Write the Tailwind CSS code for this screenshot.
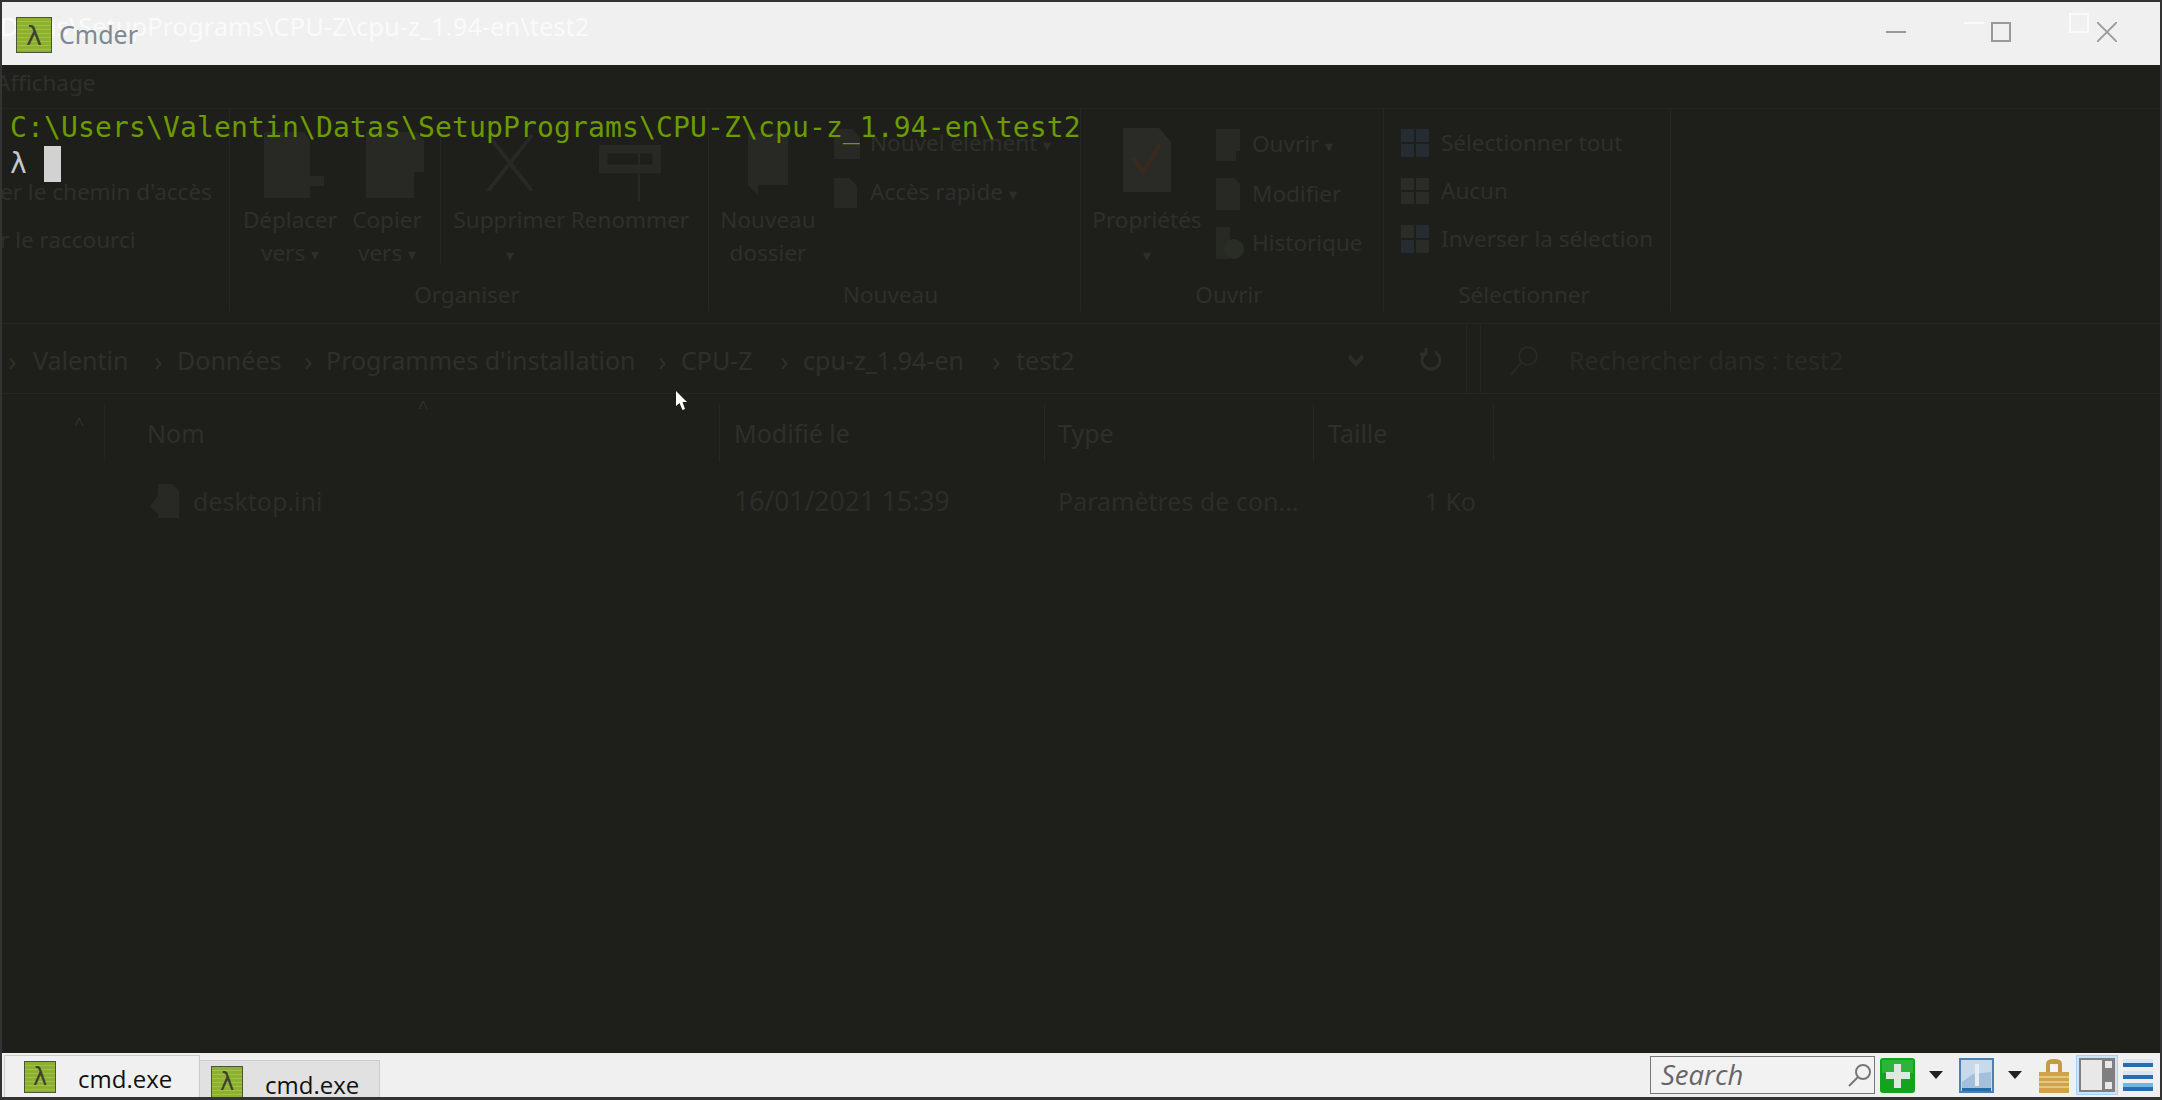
<!DOCTYPE html>
<html lang="fr">
<head>
  <meta charset="UTF-8" />
  <title>Cmder</title>
  <script src="https://cdn.jsdelivr.net/npm/@tailwindcss/browser@4"></script>
</head>
<body class="bg-[#333333] h-[1100px] w-[2162px] overflow-hidden font-['Noto_Sans',sans-serif]">
  <div class="h-[1100px] pt-[2px] pl-[2px] pr-[2px] pb-[3px] flex flex-col">

    <!-- Title bar -->
    <div class="relative h-[63px] shrink-0 bg-[#f0f0f0] flex items-center overflow-hidden">
      <div class="absolute left-[-2px] top-[-2px] text-[25.5px] leading-[52px] whitespace-nowrap text-[#fafafa]">Datas\SetupPrograms\CPU-Z\cpu-z_1.94-en\test2</div>
      <div class="absolute left-[1962px] top-[20px] w-[20px] h-[2px] bg-[#fafafa]"></div>
      <div class="absolute left-[2067px] top-[11px] w-[20px] h-[20px] border-2 border-[#fafafa]"></div>

      <div class="relative ml-[14px] w-[36px] h-[36px] mt-[3px] border border-[#4a5535] bg-[repeating-linear-gradient(180deg,#8db02e_0,#8db02e_3px,#a2c04c_3px,#a2c04c_4px)] flex items-center justify-center text-[27px] leading-none text-[#3c4030] font-['DejaVu_Sans',sans-serif]">λ</div>
      <div class="relative ml-[7px] mt-[3px] text-[25px] text-[#7c8894]">Cmder</div>

      <div class="absolute left-[1884px] top-[29px] w-[20px] h-[2px] bg-[#999999]"></div>
      <div class="absolute left-[1989px] top-[20px] w-[20px] h-[20px] border-2 border-[#999999]"></div>
      <svg class="absolute left-[2095px] top-[20px] w-[20px] h-[20px]" viewBox="0 0 20 20" fill="none" stroke="#999999" stroke-width="1.8"><path d="M0 0 L20 20 M20 0 L0 20" /></svg>
    </div>

    <!-- Terminal, with the window behind showing through -->
    <div class="relative flex-1 bg-[#1e1f1a] overflow-hidden">

      <!-- Ghost explorer window -->
      <div class="absolute inset-0 text-[25px] leading-[32px] text-[#2e2f2b] whitespace-nowrap">
        <div class="h-[43px] pt-[2px] ml-[-6px] text-[22.5px]">Affichage</div>

        <!-- Ribbon -->
        <div class="flex h-[216px] border-t border-[#23241f] text-[22.5px]">
          <div class="border-r border-[#262722] h-[202px] pt-[67px] pl-[12px] ml-[-14px] w-[242px] flex flex-col gap-[16px]">
            <div>er le chemin d'accès</div>
            <div>r le raccourci</div>
          </div>

          <div class="w-[479px] border-r border-[#262722] h-[202px] flex flex-col">
            <div class="flex h-[168px]">
              <div class="w-[112px] pl-[8px] flex flex-col items-center">
                <svg class="w-[60px] h-[66px] mt-[23px] ml-[8px] shrink-0" viewBox="0 0 60 66" fill="#282925"><path d="M0 0 H40 L46 8 V44 H60 V54 H46 V66 H0 Z" /></svg>
                <div class="mt-[5px] leading-[33px] text-center">Déplacer<br />vers <span class="text-[16px] align-middle">▾</span></div>
              </div>
              <div class="w-[98px] pr-[8px] flex flex-col items-center">
                <svg class="w-[58px] h-[66px] mt-[23px] ml-[16px] shrink-0" viewBox="0 0 58 66" fill="#282925"><path d="M0 0 H50 L58 8 V40 H48 V66 H0 Z" /></svg>
                <div class="mt-[5px] leading-[33px] text-center">Copier<br />vers <span class="text-[16px] align-middle">▾</span></div>
              </div>
              <div class="w-[130px] pl-[8px] border-l border-[#262722] h-[132px] mt-[24px] flex flex-col items-center">
                <svg class="w-[52px] h-[56px] mt-[2px] shrink-0" viewBox="0 0 52 56" fill="none" stroke="#282925" stroke-width="4"><path d="M4 0 L48 56 M48 0 L4 56" /></svg>
                <div class="mt-[12px] leading-[33px] text-center">Supprimer<br /><span class="text-[16px]">▾</span></div>
              </div>
              <div class="w-[120px] flex flex-col items-center">
                <svg class="w-[62px] h-[60px] mt-[36px] shrink-0" viewBox="0 0 62 60" fill="none" stroke="#282925" stroke-width="9"><path d="M4 4 H58 V24 H4 Z" /><path d="M40 0 V56" stroke-width="2" /></svg>
                <div class="mt-[-2px] leading-[33px] text-center">Renommer</div>
              </div>
            </div>
            <div class="text-center pr-[4px] pt-[2px]">Organiser</div>
          </div>

          <div class="w-[372px] border-r border-[#262722] h-[202px] flex flex-col">
            <div class="flex h-[168px]">
              <div class="w-[118px] flex flex-col items-center">
                <svg class="w-[40px] h-[62px] mt-[24px] shrink-0" viewBox="0 0 40 62" fill="#282925"><path d="M0 0 H40 V52 H10 V62 L0 52 Z" /></svg>
                <div class="mt-[8px] leading-[33px] text-center">Nouveau<br />dossier</div>
              </div>
              <div class="flex flex-col gap-[17px] pt-[19px]">
                <div class="flex items-center gap-[10px] h-[32px] ml-[7px]">
                  <svg class="w-[26px] h-[30px]" viewBox="0 0 26 30" fill="#282925"><path d="M0 0 H18 L26 8 V30 H0 Z" /></svg>
                  <span>Nouvel élément <span class="text-[16px] align-middle">▾</span></span>
                </div>
                <div class="flex items-center gap-[13px] h-[32px] ml-[7px]">
                  <svg class="w-[23px] h-[30px]" viewBox="0 0 23 30" fill="#282925"><path d="M0 0 H15 L23 8 V30 H0 Z" /></svg>
                  <span>Accès rapide <span class="text-[16px] align-middle">▾</span></span>
                </div>
              </div>
            </div>
            <div class="text-center pr-[8px] pt-[2px]">Nouveau</div>
          </div>

          <div class="w-[303px] border-r border-[#262722] h-[202px] flex flex-col">
            <div class="flex h-[168px]">
              <div class="w-[132px] flex flex-col items-center">
                <svg class="w-[48px] h-[64px] mt-[19px] shrink-0" viewBox="0 0 48 64"><path d="M0 0 H36 L48 14 V64 H0 Z" fill="#2a2b27" /><path d="M10 30 L20 44 L37 16" fill="none" stroke="#3a2a1e" stroke-width="4" /></svg>
                <div class="mt-[11px] leading-[33px] text-center">Propriétés<br /><span class="text-[16px]">▾</span></div>
              </div>
              <div class="flex flex-col gap-[17px] pt-[20px]">
                <div class="flex items-center gap-[12px] h-[32px] ml-[3px]">
                  <svg class="w-[24px] h-[32px]" viewBox="0 0 24 32" fill="#282925"><path d="M0 0 H24 V14 L28 22 H20 V32 H0 Z" /></svg>
                  <span>Ouvrir <span class="text-[16px] align-middle">▾</span></span>
                </div>
                <div class="flex items-center gap-[12px] h-[32px] ml-[3px]">
                  <svg class="w-[24px] h-[32px]" viewBox="0 0 24 32" fill="#282925"><path d="M0 0 H18 L24 6 V32 H0 Z" /></svg>
                  <span>Modifier</span>
                </div>
                <div class="flex items-center gap-[12px] h-[32px] ml-[3px]">
                  <svg class="w-[30px] h-[32px] mr-[-6px]" viewBox="0 0 30 32"><path d="M0 0 H14 V32 H0 Z" fill="#282925" /><circle cx="18" cy="22" r="10" fill="#2a2d25" /></svg>
                  <span>Historique</span>
                </div>
              </div>
            </div>
            <div class="text-center pr-[6px] pt-[2px]">Ouvrir</div>
          </div>

          <div class="w-[287px] border-r border-[#262722] h-[202px] flex flex-col">
            <div class="flex flex-col gap-[16px] pt-[18px] pl-[17px] h-[168px]">
              <div class="flex items-center gap-[12px] h-[32px]">
                <div class="grid grid-cols-2 gap-[2px] w-[28px]"><i class="h-[13px] bg-[#252d33]"></i><i class="h-[13px] bg-[#252d33]"></i><i class="h-[13px] bg-[#252d33]"></i><i class="h-[13px] bg-[#252d33]"></i></div>
                <span>Sélectionner tout</span>
              </div>
              <div class="flex items-center gap-[12px] h-[32px]">
                <div class="grid grid-cols-2 gap-[2px] w-[28px]"><i class="h-[12px] bg-[#2b2c28]"></i><i class="h-[12px] bg-[#2b2c28]"></i><i class="h-[12px] bg-[#2b2c28]"></i><i class="h-[12px] bg-[#2b2c28]"></i></div>
                <span>Aucun</span>
              </div>
              <div class="flex items-center gap-[12px] h-[32px]">
                <div class="grid grid-cols-2 gap-[2px] w-[28px]"><i class="h-[13px] bg-[#2b2c28]"></i><i class="h-[13px] bg-[#252d33]"></i><i class="h-[13px] bg-[#252d33]"></i><i class="h-[13px] bg-[#2b2c28]"></i></div>
                <span>Inverser la sélection</span>
              </div>
            </div>
            <div class="text-center pr-[6px] pt-[2px]">Sélectionner</div>
          </div>
        </div>

        <!-- Address bar -->
        <div class="flex h-[71px] mt-[-1px] border-y border-[#262722] items-center">
          <div class="flex items-center w-[1465px] h-full border-r border-[#262722] pt-[3px]">
            <span class="w-[31px] pl-[6px] text-[28px]">›</span><span class="w-[121px]">Valentin</span>
            <span class="w-[23px] text-[28px]">›</span><span class="w-[127px]">Données</span>
            <span class="w-[22px] text-[28px]">›</span><span class="w-[332px]">Programmes d'installation</span>
            <span class="w-[23px] text-[28px]">›</span><span class="w-[99px]">CPU-Z</span>
            <span class="w-[23px] text-[28px]">›</span><span class="w-[189px]">cpu-z_1.94-en</span>
            <span class="w-[24px] text-[28px]">›</span><span class="w-[332px]">test2</span>
            <svg class="w-[16px] h-[12px] mr-[56px]" viewBox="0 0 16 12" fill="none" stroke="#2d2e2a" stroke-width="4"><path d="M1 2 L8 10 L15 2" /></svg>
            <svg class="w-[22px] h-[24px]" viewBox="0 0 22 24" fill="none" stroke="#2d2e2a" stroke-width="3"><path d="M7 4 A9 9 0 1 0 15 4 M6 0 V6 H0" /></svg>
          </div>
          <div class="flex items-center ml-[13px] h-full flex-1 border-l border-[#262722] pl-[29px] pt-[3px] gap-[31px] text-[#292a26]">
            <svg class="w-[28px] h-[30px]" viewBox="0 0 28 30" fill="none" stroke="#282925" stroke-width="2"><circle cx="18" cy="11" r="9" /><path d="M11 18 L1 30" /></svg>
            <span>Rechercher dans : test2</span>
          </div>
        </div>

        <!-- List header -->
        <div class="relative">
          <div class="flex h-[58px] mt-[10px] items-center">
            <div class="w-[103px] h-full relative border-r border-[#23241f]"><span class="absolute left-[72px] top-[10px] text-[18px] leading-[20px]">^</span></div>
            <div class="w-[615px] h-full flex items-center pl-[42px] border-r border-[#262722] relative">Nom<span class="absolute left-[313px] top-[-7px] text-[18px] leading-[20px]">^</span></div>
            <div class="w-[325px] h-full flex items-center pl-[14px] border-r border-[#262722]">Modifié le</div>
            <div class="w-[269px] h-full flex items-center pl-[13px] border-r border-[#262722]">Type</div>
            <div class="w-[180px] h-full flex items-center pl-[14px] border-r border-[#262722]">Taille</div>
          </div>
          <div class="flex mt-[22px] h-[34px] items-center text-[#2c2d29]">
            <div class="w-[103px]"></div>
            <div class="w-[615px] flex items-center pl-[45px] gap-[14px]">
              <svg class="w-[29px] h-[34px]" viewBox="0 0 29 34" fill="#282925"><path d="M8 0 H22 L29 7 V34 H8 V30 L0 22 L8 12 Z" /></svg>
              <span>desktop.ini</span>
            </div>
            <div class="w-[325px] pl-[14px] text-[26.5px]">16/01/2021 15:39</div>
            <div class="w-[269px] pl-[13px]">Paramètres de con...</div>
            <div class="w-[180px] pr-[18px] text-right">1 Ko</div>
          </div>
        </div>
      </div>

      <!-- Terminal text -->
      <div class="relative pl-[8px] pt-[45px] font-['DejaVu_Sans_Mono',monospace] text-[28px] leading-[36px] tracking-[0.14px]">
        <div class="text-[#6b9b00] whitespace-nowrap">C:\Users\Valentin\Datas\SetupPrograms\CPU-Z\cpu-z_1.94-en\test2</div>
        <div class="flex text-[#c8c8c8]">
          <span class="w-[34px]">λ</span>
          <span class="w-[17px] h-[36px] bg-[#d2d2d2]"></span>
        </div>
      </div>

      <!-- Mouse cursor -->
      <svg class="absolute left-[674px] top-[326px] w-[12px] h-[20px]" viewBox="0 0 12 20" fill="#ffffff"><path d="M0 0 V15 L3.5 12 L6.5 19 L9 18 L6.5 11 H11 Z" /></svg>
    </div>

    <!-- Status bar -->
    <div class="h-[44px] shrink-0 bg-[#f0f0f0] flex items-end pl-[2px] relative">
      <div class="w-[196px] h-[42px] bg-[#f0f0f0] border border-b-0 border-[#cccccc] flex pl-[19px] pt-[5px] text-[24px] leading-[33px] text-[#111111]">
        <div class="w-[32px] h-[32px] border border-[#4a5535] bg-[repeating-linear-gradient(180deg,#8db02e_0,#8db02e_3px,#a2c04c_3px,#a2c04c_4px)] flex items-center justify-center text-[24px] leading-none text-[#3c4030] font-['DejaVu_Sans',sans-serif]">λ</div>
        <span class="ml-[22px] mt-[1px] font-['Open_Sans',sans-serif]">cmd.exe</span>
      </div>
      <div class="w-[180px] h-[37px] bg-[#e1e1e1] border-t border-r border-[#cccccc] overflow-hidden flex pl-[11px] pt-[5px] text-[24px] leading-[33px] text-[#111111]">
        <div class="w-[32px] h-[32px] shrink-0 border border-[#4a5535] bg-[repeating-linear-gradient(180deg,#8db02e_0,#8db02e_3px,#a2c04c_3px,#a2c04c_4px)] flex items-center justify-center text-[24px] leading-none text-[#3c4030] font-['DejaVu_Sans',sans-serif]">λ</div>
        <span class="ml-[22px] mt-[2px] font-['Open_Sans',sans-serif]">cmd.exe</span>
      </div>

      <div class="ml-auto self-start flex items-center h-[44px] mr-[7px]">
        <div class="w-[225px] h-[38px] border border-[#777777] bg-[#f2f2f2] flex items-center pl-[10px] pr-[2px] justify-between">
          <span class="italic text-[27.5px] text-[#666666] font-['Open_Sans',sans-serif]">Search</span>
          <svg class="w-[24px] h-[24px]" viewBox="0 0 24 24" fill="none" stroke="#777777" stroke-width="2"><circle cx="15" cy="9" r="7" /><path d="M10 14 L1 23" /></svg>
        </div>
        <svg class="w-[35px] h-[35px] ml-[5px]" viewBox="0 0 35 35"><rect width="35" height="35" rx="3" fill="#12a41c" /><rect x="2" y="2" width="31" height="13" fill="#2db53a" /><path d="M14 6 H21 V14 H30 V21 H21 V30 H14 V21 H6 V14 H14 Z" fill="#dfe8de" /></svg>
        <svg class="w-[14px] h-[8px] ml-[14px]" viewBox="0 0 14 8" fill="#222222"><path d="M0 0 H14 L7 8 Z" /></svg>
        <svg class="w-[35px] h-[35px] ml-[16px]" viewBox="0 0 35 35"><rect x="1" y="1" width="33" height="33" fill="#c7d9ea" stroke="#4a80b5" stroke-width="2" /><path d="M3 30 V24 L14 16 L32 14 V30 Z" fill="#a3bfdb" /><rect x="3" y="30" width="29" height="3" fill="#2c6aa5" /><rect x="16" y="6" width="4" height="22" fill="#e8edf2" /></svg>
        <svg class="w-[14px] h-[8px] ml-[14px]" viewBox="0 0 14 8" fill="#222222"><path d="M0 0 H14 L7 8 Z" /></svg>
        <svg class="w-[30px] h-[35px] ml-[17px]" viewBox="0 0 30 35"><path d="M7 14 V6 Q7 1 15 1 Q23 1 23 6 V14 H19 V6 H11 V14 Z" fill="#c49a45" /><rect y="14" width="30" height="21" fill="#cfa349" /><path d="M0 19 H30 M0 24 H30 M0 29 H30" stroke="#e4c882" stroke-width="2" /><rect x="12" y="8" width="6" height="6" fill="#f5f5f5" /></svg>
        <div class="w-[42px] h-[40px] ml-[7px] bg-[#cfe3f7] border border-[#a8d0f5] flex items-center justify-center">
          <svg class="w-[36px] h-[34px]" viewBox="0 0 36 34"><rect width="36" height="34" fill="#7f7f7f" /><rect x="2" y="2" width="21" height="30" fill="#e8e8e8" /><rect x="26" y="3" width="7" height="7" fill="#e8e8e8" /><rect x="26" y="24" width="7" height="7" fill="#e8e8e8" /></svg>
        </div>
        <div class="w-[30px] ml-[5px] flex flex-col gap-[4px]">
          <div class="h-[8px] bg-[linear-gradient(180deg,#d9e6f2_0,#d9e6f2_50%,#2b6cb0_50%,#2b6cb0_100%)]"></div>
          <div class="h-[8px] bg-[linear-gradient(180deg,#d9e6f2_0,#d9e6f2_50%,#2b6cb0_50%,#2b6cb0_100%)]"></div>
          <div class="h-[8px] bg-[linear-gradient(180deg,#6fb6e8_0,#6fb6e8_50%,#2b6cb0_50%,#2b6cb0_100%)]"></div>
        </div>
      </div>
    </div>
  </div>
</body>
</html>
